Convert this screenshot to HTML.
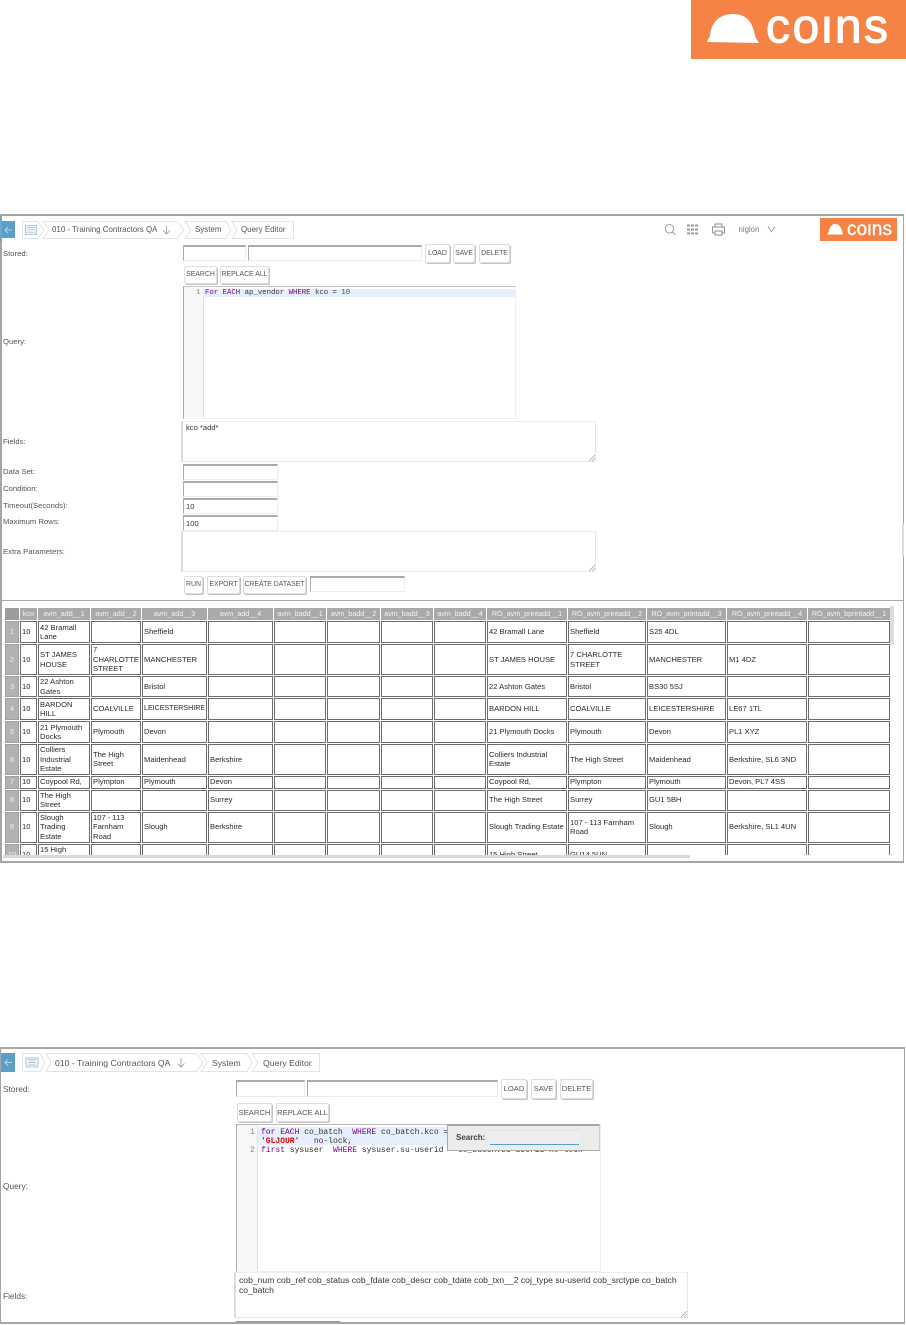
<!DOCTYPE html>
<html lang="en"><head><meta charset="utf-8"><title>Query Editor</title>
<style>
html,body{margin:0;padding:0;background:#fff}
body{position:relative;width:906px;height:1325px;overflow:hidden;font-family:"Liberation Sans",sans-serif;color:#444}
.a,.t,.i,.b,.ta,.m{position:absolute}
.t{font-size:7.7px;line-height:10px;white-space:nowrap;color:#555}
.i{box-sizing:border-box;border:1px solid #ececec;border-top:2px solid #aaa;border-left:1px solid #aaa;background:#fff;font-size:7.6px;color:#333;padding-left:2px}
.b{box-sizing:border-box;background:#fff;border:1px solid #ddd;border-radius:2px;box-shadow:1px 1px 0 #c4c4c4;text-align:center;font-size:6.9px;color:#555;white-space:nowrap}
.ta{box-sizing:border-box;background:#fff;border:1px solid #e6e6e6;border-left:2px solid #ddd;border-top:1px solid #eee;font-size:7.6px;line-height:10px;color:#333;padding:1px 3px}
.m{font-family:"Liberation Mono",monospace;font-size:7.33px;line-height:9px;white-space:pre;color:#333}
.k{color:#708}.n{color:#164}
.s{color:#f00000;font-weight:bold}
table{border-collapse:separate;border-spacing:1px;table-layout:fixed;width:887px;position:absolute;left:0;top:1px}
td,th{box-sizing:border-box;border:1px solid #6c6c6c;padding:0 1px;font-size:7.6px;line-height:9.5px;font-weight:normal;color:#2a2a2a;overflow:hidden;vertical-align:middle;background:#fff;text-align:left}
th{background:#a9a9a9;color:#f4f4f4;border-color:#a9a9a9;text-align:center;white-space:nowrap;font-size:7.2px;padding:0}
td.r{background:#b2b2b2;color:#f0f0f0;border-color:#a0a0a0;text-align:center;padding:0}
tr.h{height:12px}
</style></head>
<body>
<!-- top logo -->
<svg class="a" style="left:691px;top:0" width="215" height="59" viewBox="691 0 215 59">
<defs><clipPath id="c1"><rect x="760" y="15.500" width="140" height="35"/></clipPath><clipPath id="c2"><rect x="845" y="224" width="50" height="14"/></clipPath></defs>
<rect x="691" y="0" width="215" height="59" fill="#f58345"/>
<path d="M707 42 C708 39 709 38 710 36 C711 22 720 14 733 14 C746 14 753 22 755 36 L756 38 L759 43 Z" fill="#fff"/>
<g clip-path="url(#c1)"><text x="766" y="42.500" font-family="Liberation Sans" font-size="48" fill="#fff" stroke="#fff" stroke-width="1" textLength="122" lengthAdjust="spacing">coins</text></g>
</svg>

<!-- FRAME 1 -->
<div class="a" style="left:0;top:214px;width:904px;height:649px;box-sizing:border-box;border:1px solid #a6a6a6;border-top-width:2px;border-left-width:2px;border-bottom-width:2px"></div>
<div class="a" style="left:902px;top:524px;width:2px;height:32px;background:#ddd"></div>
<svg class="a" style="left:0;top:216px" width="300" height="26" viewBox="0 216 300 26" fill="none">
<rect x="2" y="221" width="13" height="17" fill="#5b9fc9"/>
<rect x="0" y="216" width="2" height="26" fill="#6fa8cc"/>
<path d="M12 230H5M8 227l-3 3 3 3" stroke="#cfe3f0" stroke-width=".8"/>
<path d="M22.5 221.5H38L44 230l-6 8.500H22.500Z M43 221.500H177L184 230l-7 8.500H43L49 230Z M185 221.500H226L231 230l-5 8.500H185L191 230Z M232 221.500H293.500V238.500H232L237 230Z" stroke="#e3e3e3" stroke-width="1" fill="#fff"/>
<rect x="25.500" y="225.500" width="11" height="9" stroke="#9db8cc" stroke-width=".8" fill="#f2f7fa"/>
<path d="M27 227.500h8M27 229.800h8M27 232.200h8" stroke="#9db8cc" stroke-width=".7"/>
<path d="M166.500 226v8M163 230.500l3.500 3.500 3.500-3.500" stroke="#888" stroke-width=".7"/>
</svg>
<div class="t" style="left:52px;top:225px;font-size:7.95px">010 - Training Contractors QA</div>
<div class="t" style="left:195px;top:225px;font-size:7.95px">System</div>
<div class="t" style="left:241px;top:225px;font-size:7.95px">Query Editor</div>
<svg class="a" style="left:660px;top:220px" width="120" height="20" viewBox="660 220 120 20" fill="none" stroke="#888">
<circle cx="669.500" cy="228.800" r="4.300" stroke-width=".8"/><path d="M672.500 232l3 3" stroke-width=".8"/>
<path d="M687 225.500h3M691 225.500h3M695 225.500h3M687 229.500h3M691 229.500h3M695 229.500h3M687 233.500h3M691 233.500h3M695 233.500h3" stroke-width="2" stroke="#999"/>
<path d="M715 227v-3h7v3M712.500 233v-6h12v6h-2.500M715 231h7v4h-7zM712.500 233h2.500" stroke-width=".9"/>
<path d="M768 226.500l3.500 5.500 3.500-5.500" stroke-width=".7"/>
</svg>
<div class="t" style="left:738.500px;top:225px;font-size:7.8px;color:#6a7f90">niglon</div>
<svg class="a" style="left:820px;top:218px" width="77" height="23" viewBox="820 218 77 23">
<rect x="820" y="218" width="77" height="23" fill="#f58345"/>
<path d="M827 234.500 C828 233 828.500 232 829 231 C829.500 227 832 224 835 224 C839 224 841 227 842 231 L843 234.500Z" fill="#fff"/>
<g clip-path="url(#c2)"><text x="847" y="235" font-family="Liberation Sans" font-size="19" fill="#fff" stroke="#fff" stroke-width=".4" textLength="45" lengthAdjust="spacing">coins</text></g>
</svg>

<div class="t" style="left:3px;top:249px">Stored:</div>
<div class="i" style="left:183px;top:245px;width:63px;height:16px"></div>
<div class="i" style="left:248px;top:245px;width:174px;height:16px"></div>
<div class="b" style="left:425px;top:244px;width:25px;height:19px;line-height:17px">LOAD</div>
<div class="b" style="left:453px;top:244px;width:22px;height:19px;line-height:17px">SAVE</div>
<div class="b" style="left:479px;top:244px;width:31px;height:19px;line-height:17px">DELETE</div>
<div class="b" style="left:184px;top:266px;width:33px;height:18px;line-height:16px">SEARCH</div>
<div class="b" style="left:220px;top:266px;width:49px;height:18px;line-height:16px">REPLACE ALL</div>

<div class="t" style="left:3px;top:337px">Query:</div>
<div class="a" style="left:183px;top:286px;width:333px;height:133px;box-sizing:border-box;border:1px solid #eee;border-top:1px solid #c4c4c8;border-left:1px solid #aaa;background:#fff"></div>
<div class="a" style="left:184px;top:287px;width:19px;height:132px;background:#f7f7f7;border-right:1px solid #e2e2e2"></div>
<div class="a" style="left:203px;top:289px;width:312px;height:8px;background:#e6f0fc"></div>
<div class="m" style="left:196px;top:289px;color:#888">1</div>
<div class="m" style="left:205px;top:289px"><span class="k">For EACH</span> ap_vendor <span class="k">WHERE</span> kco = <span class="n">10</span></div>

<div class="t" style="left:3px;top:437px">Fields:</div>
<div class="ta" style="left:181px;top:421px;width:415px;height:41px">kco *add*</div>
<svg class="a" style="left:589px;top:455px" width="6" height="6" stroke="#999" stroke-width=".7"><path d="M0 6L6 0M3 6L6 3"/></svg>
<div class="t" style="left:3px;top:467px">Data Set:</div>
<div class="i" style="left:183px;top:464px;width:95px;height:16px"></div>
<div class="t" style="left:3px;top:484px">Condition:</div>
<div class="i" style="left:183px;top:481px;width:95px;height:16px"></div>
<div class="t" style="left:3px;top:501px">Timeout(Seconds):</div>
<div class="i" style="left:183px;top:498px;width:95px;height:16px;line-height:13px">10</div>
<div class="t" style="left:3px;top:517px">Maximum Rows:</div>
<div class="i" style="left:183px;top:515px;width:95px;height:16px;line-height:13px">100</div>
<div class="t" style="left:3px;top:547px">Extra Parameters:</div>
<div class="ta" style="left:181px;top:531px;width:415px;height:41px"></div>
<svg class="a" style="left:589px;top:565px" width="6" height="6" stroke="#999" stroke-width=".7"><path d="M0 6L6 0M3 6L6 3"/></svg>
<div class="b" style="left:184px;top:576px;width:19px;height:18px;line-height:16px">RUN</div>
<div class="b" style="left:207px;top:576px;width:33px;height:18px;line-height:16px">EXPORT</div>
<div class="b" style="left:243px;top:576px;width:63px;height:18px;line-height:16px">CREATE DATASET</div>
<div class="i" style="left:310px;top:576px;width:95px;height:16px"></div>
<div class="a" style="left:2px;top:600px;width:901px;height:1px;background:#aaa"></div>

<div class="a" style="left:4px;top:606px;width:886px;height:249px;overflow:hidden">
<table>
<colgroup><col style="width:14px"><col style="width:17px"><col style="width:52px"><col style="width:50px"><col style="width:65px"><col style="width:65px"><col style="width:52px"><col style="width:53px"><col style="width:52px"><col style="width:52px"><col style="width:80px"><col style="width:78px"><col style="width:79px"><col style="width:80px"><col style="width:82px"></colgroup>
<tr class="h"><th style="background:#9c9c9c;border-color:#9c9c9c"></th><th>kco</th><th>avm_add__1</th><th>avm_add__2</th><th>avm_add__3</th><th>avm_add__4</th><th>avm_badd__1</th><th>avm_badd__2</th><th>avm_badd__3</th><th>avm_badd__4</th><th>RO_avm_printadd__1</th><th>RO_avm_printadd__2</th><th>RO_avm_printadd__3</th><th>RO_avm_printadd__4</th><th>RO_avm_bprintadd__1</th></tr>
<tr style="height:22px"><td class="r">1</td><td>10</td><td>42 Bramall<br>Lane</td><td></td><td>Sheffield</td><td></td><td></td><td></td><td></td><td></td><td>42 Bramall Lane</td><td>Sheffield</td><td>S25 4DL</td><td></td><td></td></tr>
<tr style="height:31px"><td class="r">2</td><td>10</td><td>ST JAMES<br>HOUSE</td><td>7<br>CHARLOTTE<br>STREET</td><td>MANCHESTER</td><td></td><td></td><td></td><td></td><td></td><td>ST JAMES HOUSE</td><td>7 CHARLOTTE<br>STREET</td><td>MANCHESTER</td><td>M1 4DZ</td><td></td></tr>
<tr style="height:21px"><td class="r">3</td><td>10</td><td>22 Ashton<br>Gates</td><td></td><td>Bristol</td><td></td><td></td><td></td><td></td><td></td><td>22 Ashton Gates</td><td>Bristol</td><td>BS30 5SJ</td><td></td><td></td></tr>
<tr style="height:22px"><td class="r">4</td><td>10</td><td>BARDON<br>HILL</td><td>COALVILLE</td><td style="font-size:7.1px">LEICESTERSHIRE</td><td></td><td></td><td></td><td></td><td></td><td>BARDON HILL</td><td>COALVILLE</td><td>LEICESTERSHIRE</td><td>LE67 1TL</td><td></td></tr>
<tr style="height:22px"><td class="r">5</td><td>10</td><td>21 Plymouth<br>Docks</td><td>Plymouth</td><td>Devon</td><td></td><td></td><td></td><td></td><td></td><td>21 Plymouth Docks</td><td>Plymouth</td><td>Devon</td><td>PL1 XYZ</td><td></td></tr>
<tr style="height:30px"><td class="r">6</td><td>10</td><td>Colliers<br>Industrial<br>Estate</td><td>The High<br>Street</td><td>Maidenhead</td><td>Berkshire</td><td></td><td></td><td></td><td></td><td>Colliers Industrial<br>Estate</td><td>The High Street</td><td>Maidenhead</td><td>Berkshire, SL6 3ND</td><td></td></tr>
<tr style="height:13px"><td class="r">7</td><td>10</td><td>Coypool Rd,</td><td>Plympton</td><td>Plymouth</td><td>Devon</td><td></td><td></td><td></td><td></td><td>Coypool Rd,</td><td>Plympton</td><td>Plymouth</td><td>Devon, PL7 4SS</td><td></td></tr>
<tr style="height:21px"><td class="r">8</td><td>10</td><td>The High<br>Street</td><td></td><td></td><td>Surrey</td><td></td><td></td><td></td><td></td><td>The High Street</td><td>Surrey</td><td>GU1 5BH</td><td></td><td></td></tr>
<tr style="height:31px"><td class="r">9</td><td>10</td><td>Slough<br>Trading<br>Estate</td><td>107 - 113<br>Farnham<br>Road</td><td>Slough</td><td>Berkshire</td><td></td><td></td><td></td><td></td><td>Slough Trading Estate</td><td>107 - 113 Farnham<br>Road</td><td>Slough</td><td>Berkshire, SL1 4UN</td><td></td></tr>
<tr style="height:22px"><td class="r">10</td><td>10</td><td>15 High<br>Street</td><td></td><td></td><td></td><td></td><td></td><td></td><td></td><td>15 High Street</td><td>GU14 5UN</td><td></td><td></td><td></td></tr>
</table>
</div>
<div class="a" style="left:890px;top:606px;width:4px;height:39px;background:#ddd"></div>
<div class="a" style="left:3px;top:855px;width:687px;height:3px;background:#d8d8d8"></div>

<!-- FRAME 2 -->
<div class="a" style="left:0;top:1047px;width:905px;height:277px;box-sizing:border-box;border:1px solid #a6a6a6;border-top-width:2px;border-bottom-width:2px"></div>
<svg class="a" style="left:0;top:1049px" width="330" height="28" viewBox="0 1049 330 28" fill="none">
<rect x="1" y="1053" width="14" height="19" fill="#5b9fc9"/>
<path d="M12 1062.500H5M8 1059.500l-3 3 3 3" stroke="#cfe3f0" stroke-width=".8"/>
<path d="M22.500 1053.500H40L45 1062.500l-5 9H22.500Z M46 1053.500H197L203 1062.500l-6 9H46L51 1062.500Z M201 1053.500H247L252 1062.500l-5 9H201L207 1062.500Z M252 1053.500H319.500V1071.500H252L258 1062.500Z" stroke="#e3e3e3" stroke-width="1" fill="#fff"/>
<rect x="26" y="1058" width="12" height="9" stroke="#9db8cc" stroke-width=".8" fill="#f2f7fa"/>
<path d="M28 1060h8M28 1062.500h8M28 1065h8" stroke="#9db8cc" stroke-width=".7"/>
<path d="M181 1058v9M177.500 1063.500l3.500 3.500 3.500-3.500" stroke="#888" stroke-width=".7"/>
</svg>
<div class="t" style="left:55px;top:1058px;font-size:8.7px">010 - Training Contractors QA</div>
<div class="t" style="left:212px;top:1058px;font-size:8.6px">System</div>
<div class="t" style="left:263px;top:1058px;font-size:8.7px">Query Editor</div>

<div class="t" style="left:3px;top:1084px;font-size:8.3px">Stored:</div>
<div class="i" style="left:236px;top:1080px;width:69px;height:17px"></div>
<div class="i" style="left:307px;top:1080px;width:191px;height:17px"></div>
<div class="b" style="left:501px;top:1079px;width:26px;height:20px;line-height:18px;font-size:7.6px">LOAD</div>
<div class="b" style="left:531px;top:1079px;width:25px;height:20px;line-height:18px;font-size:7.6px">SAVE</div>
<div class="b" style="left:560px;top:1079px;width:33px;height:20px;line-height:18px;font-size:7.6px">DELETE</div>
<div class="b" style="left:237px;top:1103px;width:35px;height:19px;line-height:17px;font-size:7.6px">SEARCH</div>
<div class="b" style="left:276px;top:1103px;width:53px;height:19px;line-height:17px;font-size:7.6px">REPLACE ALL</div>

<div class="t" style="left:3px;top:1181px;font-size:8.3px">Query:</div>
<div class="a" style="left:236px;top:1124px;width:365px;height:148px;box-sizing:border-box;border:1px solid #eee;border-top:1px solid #bbb;border-left:1px solid #aaa;background:#fff"></div>
<div class="a" style="left:237px;top:1125px;width:20px;height:147px;background:#f7f7f7;border-right:1px solid #e2e2e2"></div>
<div class="a" style="left:258px;top:1127px;width:190px;height:18px;background:#e6f0fc"></div>
<div class="m" style="left:250px;top:1128px;font-size:8px;color:#888">1</div>
<div class="m" style="left:250px;top:1146px;font-size:8px;color:#888">2</div>
<div class="m" style="left:261px;top:1128px;font-size:8px"><span class="k">for EACH</span> co_batch  <span class="k">WHERE</span> co_batch.kco =</div>
<div class="m" style="left:261px;top:1137px;font-size:8px"><span class="s">'GLJOUR'</span>   <span class="k">no</span>-lock,</div>
<div class="m" style="left:261px;top:1146px;font-size:8px"><span class="k">first</span> sysuser  <span class="k">WHERE</span> sysuser.su-userid   co_batch.su-userid <span class="k">no</span>-lock</div>
<div class="a" style="left:447px;top:1124px;width:153px;height:27px;box-sizing:border-box;background:#ececec;border:1px solid #aaa;border-top:2px solid #a6a6a6;border-right:1px solid #ccc"></div>
<div class="t" style="left:456px;top:1133px;font-size:8px;font-weight:bold;color:#444">Search:</div>
<div class="a" style="left:490px;top:1130px;width:89px;height:15px;box-sizing:border-box;background:#eee;border-bottom:1px solid #5b9fc9;border-top:1px solid #e0e0e0"></div>

<div class="t" style="left:3px;top:1291px;font-size:8.3px">Fields:</div>
<div class="ta" style="left:234px;top:1272px;width:454px;height:46px;font-size:8.6px;padding:2px 3px;color:#333">cob_num cob_ref cob_status cob_fdate cob_descr cob_tdate cob_txn__2 coj_type su-userid cob_srctype co_batch<br>co_batch</div>
<svg class="a" style="left:681px;top:1311px" width="6" height="6" stroke="#999" stroke-width=".7"><path d="M0 6L6 0M3 6L6 3"/></svg>
<div class="a" style="left:236px;top:1321px;width:104px;height:1px;background:#999"></div>
</body></html>
